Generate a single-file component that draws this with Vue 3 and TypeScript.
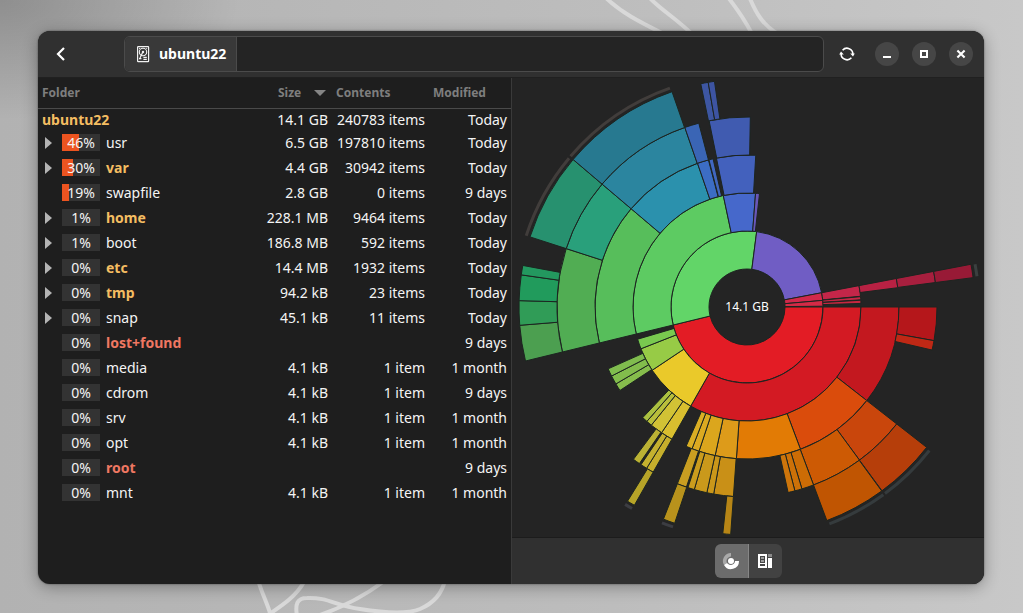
<script setup lang="ts">
import { ref } from 'vue'

interface Folder {
  name: string
  percent?: number
  size?: string
  contents?: string
  modified: string
  tone?: 'amber' | 'coral'
  expandable?: boolean
}

const folders: Folder[] = [
  { name: 'ubuntu22', size: '14.1 GB', contents: '240783 items', modified: 'Today', tone: 'amber' },
  { name: 'usr', percent: 46, size: '6.5 GB', contents: '197810 items', modified: 'Today', expandable: true },
  { name: 'var', percent: 30, size: '4.4 GB', contents: '30942 items', modified: 'Today', tone: 'amber', expandable: true },
  { name: 'swapfile', percent: 19, size: '2.8 GB', contents: '0 items', modified: '9 days' },
  { name: 'home', percent: 1, size: '228.1 MB', contents: '9464 items', modified: 'Today', tone: 'amber', expandable: true },
  { name: 'boot', percent: 1, size: '186.8 MB', contents: '592 items', modified: 'Today', expandable: true },
  { name: 'etc', percent: 0, size: '14.4 MB', contents: '1932 items', modified: 'Today', tone: 'amber', expandable: true },
  { name: 'tmp', percent: 0, size: '94.2 kB', contents: '23 items', modified: 'Today', tone: 'amber', expandable: true },
  { name: 'snap', percent: 0, size: '45.1 kB', contents: '11 items', modified: 'Today', expandable: true },
  { name: 'lost+found', percent: 0, modified: '9 days', tone: 'coral' },
  { name: 'media', percent: 0, size: '4.1 kB', contents: '1 item', modified: '1 month' },
  { name: 'cdrom', percent: 0, size: '4.1 kB', contents: '1 item', modified: '9 days' },
  { name: 'srv', percent: 0, size: '4.1 kB', contents: '1 item', modified: '1 month' },
  { name: 'opt', percent: 0, size: '4.1 kB', contents: '1 item', modified: '1 month' },
  { name: 'root', percent: 0, modified: '9 days', tone: 'coral' },
  { name: 'mnt', percent: 0, size: '4.1 kB', contents: '1 item', modified: '1 month' },
]

// Each sector: ring number, start and end angle (degrees, clockwise from east), fill.
type Sector = [number, number, number, string]

const sectors: Sector[] = [
  [1, 0, 166.3, '#e31c25'],
  [1, 166.3, 277.3, '#62d568'],
  [1, 277.3, 349.2, '#705dc4'],
  [1, 349.2, 355, '#d2294b'],
  [1, 355, 359.4, '#d52a46'],

  [2, 0, 119.6, '#d31a23'],
  [2, 119.6, 146.3, '#eac92a'],
  [2, 146.3, 158.5, '#97cb46'],
  [2, 158.5, 163.6, '#79c94f'],
  [2, 166.3, 258, '#5dcb62'],
  [2, 258, 274.3, '#4668cb'],
  [2, 274.3, 276.3, '#6957b8'],
  [2, 349.2, 354.6, '#c42649'],
  [2, 354.8, 356.4, '#c52745'],
  [2, 356.6, 358.2, '#c72740'],

  [3, 0, 38, '#c3181f'],
  [3, 38, 69.4, '#da4c0c'],
  [3, 69.4, 94, '#e27b05'],
  [3, 94, 102.1, '#dd9b1a'],
  [3, 102.1, 108.4, '#dba61d'],
  [3, 108.4, 111.2, '#dbaa21'],
  [3, 111.2, 113.6, '#daae24'],
  [3, 119.6, 124.2, '#d9bf2f'],
  [3, 124.2, 129, '#d1c235'],
  [3, 129, 131.2, '#b9bf3b'],
  [3, 131.2, 133.3, '#abc040'],
  [3, 146.7, 149.6, '#86bd4c'],
  [3, 149.6, 153, '#82bc4c'],
  [3, 153, 156, '#80bc4e'],
  [3, 166.3, 220.3, '#57be5b'],
  [3, 220.3, 251, '#2b91ad'],
  [3, 251, 255.3, '#3c6dc4'],
  [3, 255.5, 257.1, '#4167bf'],
  [3, 258.4, 273.3, '#4361bd'],
  [3, 349.2, 352.7, '#b82143'],

  [4, 0, 10.2, '#b5171b'],
  [4, 10.2, 13.1, '#bf2815'],
  [4, 38, 53.7, '#c9460c'],
  [4, 53.7, 69.5, '#cd5a04'],
  [4, 69.5, 73.2, '#cc6c05'],
  [4, 73.2, 75.4, '#cd7108'],
  [4, 75.4, 77.5, '#cd750b'],
  [4, 94.1, 100.1, '#c99017'],
  [4, 100.1, 102.2, '#ca971a'],
  [4, 102.2, 106.1, '#ca991b'],
  [4, 106.1, 108.1, '#ca9c1d'],
  [4, 108.6, 111.5, '#c99e21'],
  [4, 119.6, 121.9, '#c6af2c'],
  [4, 121.9, 123.9, '#c4b12f'],
  [4, 124.5, 126.7, '#bbb234'],
  [4, 166.3, 197.9, '#51ad53'],
  [4, 197.9, 220.3, '#29a07b'],
  [4, 220.3, 250.9, '#2b859f'],
  [4, 250.9, 255.3, '#3a65b5'],
  [4, 258.5, 271, '#405bb0'],
  [4, 349.2, 352.6, '#a71f3e'],

  [5, 38, 53.7, '#b63e0a'],
  [5, 53.8, 69.5, '#c05502'],
  [5, 94.1, 96.1, '#b78516'],
  [5, 108.5, 111.5, '#b8921c'],
  [5, 119.6, 121.6, '#b7a428'],
  [5, 166.3, 175.4, '#4c9f50'],
  [5, 175.4, 181.6, '#309c57'],
  [5, 181.6, 188.1, '#219b5c'],
  [5, 188.1, 190.5, '#23985f'],
  [5, 197.9, 220.3, '#27916f'],
  [5, 220.3, 250.8, '#277990'],
  [5, 258.3, 260.2, '#3d56a2'],
  [5, 260.2, 261.8, '#3d54a2'],
  [5, 349.2, 352.6, '#981a36'],
]

// Outer marks for branches that continue past the last visible ring.
const deeper: [number, number, string][] = [
  [197.9, 219.9, '#413d3b'],
  [220.5, 250.6, '#413d3b'],
  [38.2, 53.5, '#353b3d'],
  [54, 69.2, '#353b3d'],
  [108.6, 111.5, '#3c3d42'],
  [119.7, 121.7, '#3c3d42'],
  [349.4, 352.4, '#3b4040'],
]

const RING = 38

function point(radius: number, degrees: number): string {
  const rad = (degrees * Math.PI) / 180
  return `${(radius * Math.cos(rad)).toFixed(2)} ${(radius * Math.sin(rad)).toFixed(2)}`
}

function sectorPath([ring, from, to]: Sector): string {
  const inner = ring * RING
  const outer = inner + RING
  const large = to - from > 180 ? 1 : 0
  return `M${point(inner, from)}L${point(outer, from)}A${outer} ${outer} 0 ${large} 1 ${point(outer, to)}L${point(inner, to)}A${inner} ${inner} 0 ${large} 0 ${point(inner, from)}Z`
}

function arcPath(from: number, to: number): string {
  return `M${point(232, from)}A232 232 0 0 1 ${point(232, to)}`
}

const view = ref<'rings' | 'treemap'>('rings')
</script>

<template>
  <div class="desktop">
    <svg class="wallpaper" viewBox="0 0 1023 613" preserveAspectRatio="xMidYMid slice" aria-hidden="true">
      <g fill="none" stroke="#d9d9d9" stroke-width="4">
        <path d="M604 -4C622 14 644 24 668 36" />
        <path d="M648 -4C658 8 676 18 694 36" />
        <path d="M727 -4C738 10 746 22 752 34" />
        <path d="M749 -4C756 14 764 26 778 34" />
        <path d="M258 580C262 594 267 602 271 616" />
        <path d="M304 582C296 596 284 604 268 615" />
        <path d="M297 616C295 604 297 598 307 598C328 597 336 606 360 609C392 614 410 613 420 609C434 603 442 594 445 580" />
        <path d="M383 582C364 596 346 606 320 615" />
      </g>
    </svg>

    <main class="window">
      <header class="titlebar">
        <button class="flat back" type="button" aria-label="Back">
          <svg width="16" height="16" viewBox="0 0 16 16"><path d="M11 2 5 8l6 6" fill="none" stroke="#fff" stroke-width="2.2" /></svg>
        </button>
        <nav class="pathbar" aria-label="Location">
          <button class="crumb" type="button">
            <svg width="16" height="18" viewBox="0 0 16 18" fill="none" stroke="#f2f2f2">
              <rect x="2.6" y="1.6" width="11" height="15" rx="0.6" stroke-width="1.2" />
              <circle cx="8" cy="7" r="3.7" stroke-width="1.1" />
              <circle cx="8" cy="7" r="1.2" fill="#f2f2f2" stroke="none" />
              <path d="M7.6 7.4 5 13" stroke-width="1.2" />
              <path d="M4 13.6h2.4M8.4 12.4h3.4M8.4 14.4h3.4" stroke-width="1.1" />
              <path d="M4 3.4h1M11.2 3.4h1" />
            </svg>
            <span>ubuntu22</span>
          </button>
        </nav>
        <button class="flat" type="button" aria-label="Reload">
          <svg width="16" height="16" viewBox="0 0 16 16">
            <path d="M3.6 4.2A5.9 5.9 0 0 1 13.9 8.2M12.4 11.8A5.9 5.9 0 0 1 2.1 7.8" fill="none" stroke="#fff" stroke-width="1.6" />
            <path d="M11.2 7.4h4.6l-1.8 3.2zM.2 8.6h4.6L2 5.4z" fill="#fff" />
          </svg>
        </button>
        <div class="controls">
          <button type="button" aria-label="Minimize">
            <svg width="16" height="16" viewBox="0 0 16 16"><path d="M4 10h8v2H4z" fill="#fff" /></svg>
          </button>
          <button type="button" aria-label="Maximize">
            <svg width="16" height="16" viewBox="0 0 16 16"><path d="M5 5h6v6H5z" fill="none" stroke="#fff" stroke-width="2" /></svg>
          </button>
          <button type="button" aria-label="Close">
            <svg width="16" height="16" viewBox="0 0 16 16"><path d="m4.400 4.400 7.200 7.200m0-7.200-7.200 7.200" fill="none" stroke="#fff" stroke-width="2.1" /></svg>
          </button>
        </div>
      </header>

      <div class="panes">
        <section class="list">
          <table>
            <colgroup>
              <col />
              <col class="col-size" />
              <col class="col-contents" />
              <col class="col-modified" />
            </colgroup>
            <thead>
              <tr>
                <th scope="col">Folder</th>
                <th scope="col" aria-sort="descending">
                  <span class="sorted">
                    Size
                    <svg width="12" height="6" viewBox="0 0 12 6"><path d="M0 0h12L6 6z" fill="#858585" /></svg>
                  </span>
                </th>
                <th scope="col">Contents</th>
                <th scope="col">Modified</th>
              </tr>
            </thead>
            <tbody>
              <tr v-for="folder in folders" :key="folder.name" :class="{ top: folder.percent === undefined }">
                <td>
                  <div class="entry">
                    <template v-if="folder.percent !== undefined">
                      <span class="toggle">
                        <button v-if="folder.expandable" type="button" :aria-label="`Expand ${folder.name}`">
                          <svg width="7" height="12" viewBox="0 0 7 12"><path d="M0 0v12l7-6z" fill="#b4b4b4" /></svg>
                        </button>
                      </span>
                      <span class="usage">
                        <span v-if="folder.percent > 1" class="fill" :style="{ width: folder.percent + '%' }"></span>
                        <span class="percent">{{ folder.percent }}%</span>
                      </span>
                    </template>
                    <span class="name" :class="folder.tone">{{ folder.name }}</span>
                  </div>
                </td>
                <td>{{ folder.size }}</td>
                <td>{{ folder.contents }}</td>
                <td>{{ folder.modified }}</td>
              </tr>
            </tbody>
          </table>
        </section>

        <section class="visual">
          <div class="canvas">
            <svg class="rings" viewBox="-235 -229 472 459" role="img" aria-label="Disk usage by folder">
              <g stroke="#1c2420" stroke-width="1" stroke-linejoin="round">
                <path v-for="(sector, i) in sectors" :key="i" :d="sectorPath(sector)" :fill="sector[3]" />
              </g>
              <g fill="none" stroke-width="3">
                <path v-for="(arc, i) in deeper" :key="i" :d="arcPath(arc[0], arc[1])" :stroke="arc[2]" />
              </g>
              <text x="0" y="4" text-anchor="middle">14.1 GB</text>
            </svg>
          </div>
          <footer class="switcher">
            <button type="button" aria-label="Rings chart" :aria-pressed="view === 'rings'" @click="view = 'rings'">
              <svg width="18" height="18" viewBox="0 0 18 18">
                <path d="M9 1A8 8 0 0 0 2 13l3-2A4.400 4.400 0 0 1 9 4.600z" fill="#a9a9a9" />
                <path d="M17 9A8 8 0 0 1 2 13l3-2A4.600 4.600 0 0 0 13 9z" fill="#fff" />
                <circle cx="9" cy="9" r="3.8" fill="#6c6c6c" />
                <circle cx="9" cy="9" r="3" fill="#fff" />
              </svg>
            </button>
            <button type="button" aria-label="Treemap chart" :aria-pressed="view === 'treemap'" @click="view = 'treemap'">
              <svg width="16" height="16" viewBox="0 0 16 16">
                <path d="M1 1h9v14H1z" fill="#fff" />
                <path d="M3 3h5v7H3z" fill="#454545" />
                <path d="M4 4h3v2H4zM4 7h3v2H4z" fill="#9b9b9b" />
                <path d="M3 11h5v2H3z" fill="#454545" />
                <path d="M11 1h4v3h-4z" fill="#8a8a8a" />
                <path d="M11 5h4v10h-4z" fill="#fff" />
              </svg>
            </button>
          </footer>
        </section>
      </div>
    </main>
  </div>
</template>

<style>
body {
  margin: 0;
}
</style>

<style scoped>
.desktop {
  position: relative;
  display: flex;
  box-sizing: border-box;
  min-height: 100vh;
  padding: 31px 39px 29px 38px;
  background:
    radial-gradient(ellipse 240px 120px at 0 0, rgba(0, 0, 0, 0.2), transparent),
    linear-gradient(90deg, #b2b2b2, #bdbdbd 60%, #c8c8c8);
  color: #f4f4f4;
  font: 14px/20px "Noto Sans", "Open Sans", sans-serif;
}

.wallpaper {
  position: absolute;
  inset: 0;
  width: 100%;
  height: 100%;
}

button {
  display: flex;
  align-items: center;
  justify-content: center;
  margin: 0;
  padding: 0;
  border: 0;
  background: none;
  color: inherit;
  font: inherit;
}

.window {
  position: relative;
  display: flex;
  flex: 1;
  flex-direction: column;
  min-width: 0;
  overflow: hidden;
  border-radius: 12px;
  background: #1e1e1e;
  box-shadow: 0 3px 16px rgba(0, 0, 0, 0.32), 0 0 2px rgba(0, 0, 0, 0.5);
}

.titlebar {
  display: flex;
  align-items: center;
  height: 46px;
  padding: 0 11px 0 6px;
  border-bottom: 1px solid #202020;
  background: #303030;
}

.flat {
  width: 34px;
  height: 34px;
}

.back {
  margin-right: 46px;
}

.pathbar {
  display: flex;
  flex: 1;
  height: 34px;
  margin-right: 6px;
  overflow: hidden;
  border: 1px solid #4b4b4b;
  border-radius: 6px;
  background: #242424;
}

.crumb {
  gap: 8px;
  padding: 0 10px;
  border-right: 1px solid #4b4b4b;
  background: #393939;
  color: #fff;
  font-weight: 700;
}

.controls {
  display: flex;
  gap: 13px;
  margin-left: 11px;
}

.controls button {
  width: 24px;
  height: 24px;
  border-radius: 50%;
  background: #464646;
}

.panes {
  display: grid;
  flex: 1;
  grid-template-columns: 1fr 1fr;
}

.list {
  min-width: 0;
}

table {
  width: 100%;
  border-collapse: collapse;
  table-layout: fixed;
}

.col-size {
  width: 72px;
}

.col-contents {
  width: 97px;
}

.col-modified {
  width: 82px;
}

th {
  height: 30px;
  padding: 0 4px;
  border-bottom: 1px solid #4a4a4a;
  color: #7e7e7e;
  font-size: 12px;
  line-height: 16px;
  text-align: left;
}

.sorted {
  display: flex;
  align-items: center;
  justify-content: space-between;
  padding: 0 2px 0 14px;
}

td {
  height: 25px;
  padding: 0 4px;
  text-align: right;
  white-space: nowrap;
}

.top td {
  height: 21px;
}

.entry {
  display: flex;
  align-items: center;
}

.toggle {
  width: 20px;
  padding-left: 3px;
  box-sizing: border-box;
}

.usage {
  position: relative;
  width: 38px;
  height: 17px;
  margin-right: 6px;
  background: #333;
  line-height: 17px;
  text-align: center;
}

.fill {
  position: absolute;
  inset: 0 auto 0 0;
  background: #ec5420;
}

.percent {
  position: relative;
}

.amber {
  color: #f4bd62;
  font-weight: 700;
}

.coral {
  color: #ef7762;
  font-weight: 700;
}

.visual {
  display: flex;
  flex-direction: column;
  min-width: 0;
  border-left: 1px solid #3a3a3a;
  background: #242424;
}

.canvas {
  display: flex;
  flex: 1;
  min-height: 0;
}

.rings {
  width: 100%;
}

.rings text {
  fill: #fff;
  font-size: 12px;
}

.switcher {
  display: flex;
  align-items: center;
  justify-content: center;
  height: 46px;
  border-top: 1px solid #1c1c1c;
  background: #303030;
}

.switcher button {
  width: 33px;
  height: 34px;
  border-radius: 0 6px 6px 0;
  background: #424242;
}

.switcher button:first-child {
  width: 34px;
  border-right: 1px solid #868686;
  border-radius: 6px 0 0 6px;
}

.switcher button[aria-pressed="true"] {
  background: #6c6c6c;
}
</style>
